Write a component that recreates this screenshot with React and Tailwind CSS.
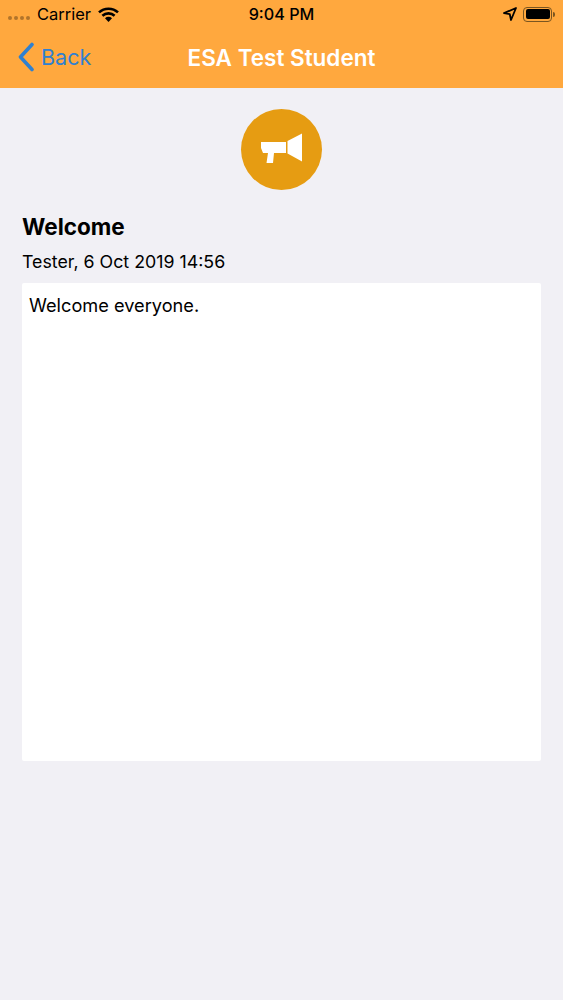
import React from 'react';

const Wifi = () => (
  <svg width="21" height="15" viewBox="0 0 21 15" className="ml-[7px]">
    <path d="M1 5.4 A14 14 0 0 1 20 5.4" fill="none" stroke="#000" strokeWidth="2.6" />
    <path d="M4.4 8.8 A9 9 0 0 1 16.6 8.8" fill="none" stroke="#000" strokeWidth="2.6" />
    <path d="M7 11.2 A5 5 0 0 1 14 11.2 L10.5 15 Z" fill="#000" />
  </svg>
);

const Megaphone = () => (
  <svg width="43" height="31" viewBox="0 0 43 31" className="mb-[2px]">
    <path d="M1 9 H26 V20 H14 L13 30 H6.5 L8 20 H3 L1 15 Z" fill="#fff" />
    <path d="M27.5 8 L42 0.5 V28.5 L27.5 20.5 Z" fill="#fff" />
  </svg>
);

const App = () => {
  return (
    <div className="w-[563px] h-[1000px] bg-[#f1f0f5] text-black font-['Inter','Liberation_Sans',sans-serif] overflow-hidden">
      <div className="h-[88px] bg-[#ffa83e] flex flex-col">
        <div className="h-[28px] grid grid-cols-3 items-center pl-[8px] pr-[8px]">
          <div className="flex items-center">
            <div className="flex gap-[2px] opacity-30 mt-[8px]">
              <span className="w-[4px] h-[4px] rounded-full bg-black"></span>
              <span className="w-[4px] h-[4px] rounded-full bg-black"></span>
              <span className="w-[4px] h-[4px] rounded-full bg-black"></span>
              <span className="w-[4px] h-[4px] rounded-full bg-black"></span>
            </div>
            <span className="ml-[7px] text-[16.5px] whitespace-nowrap">Carrier</span>
            <Wifi />
          </div>
          <div className="text-center text-[16.2px] font-medium whitespace-nowrap">9:04 PM</div>
          <div className="flex items-center justify-end gap-[6px]">
            <svg width="14" height="14" viewBox="0 0 14 14">
              <path d="M13 1 L1 6.2 L6.8 7.2 L8 13 Z" fill="none" stroke="#000" strokeWidth="1.8" strokeLinejoin="round" />
            </svg>
            <div className="flex items-center">
              <div className="w-[29px] h-[15px] rounded-[4px] border border-[#7a5520] p-[1.5px]">
                <div className="w-full h-full rounded-[2px] bg-black"></div>
              </div>
              <div className="w-[1.5px] h-[5px] bg-[#7a5520] ml-[1px] rounded-r-sm"></div>
            </div>
          </div>
        </div>
        <div className="relative flex-1 flex items-center justify-center">
          <div className="absolute left-[17px] top-[14px] flex items-center text-[#2f80d0]">
            <svg width="18" height="30" viewBox="0 0 18 30">
              <path d="M15 2.5 L3.5 15 L15 27.5" fill="none" stroke="#2f80d0" strokeWidth="3.6" strokeLinecap="round" strokeLinejoin="round" />
            </svg>
            <span className="ml-[6px] text-[21.5px] leading-[30px]">Back</span>
          </div>
          <span className="text-white text-[22.5px] font-semibold whitespace-nowrap">ESA Test Student</span>
        </div>
      </div>

      <div className="flex justify-center pt-[21px]">
        <div className="w-[81px] h-[81px] rounded-full bg-[#e69c12] flex items-center justify-center">
          <Megaphone />
        </div>
      </div>

      <div className="px-[22px]">
        <h1 className="mt-[22px] text-[22.5px] leading-[30px] font-bold">Welcome</h1>
        <p className="mt-[8px] text-[17.8px] leading-[24px]">Tester, 6 Oct 2019 14:56</p>
        <div className="mt-[9px] h-[478px] bg-white rounded-[2px] pl-[7px] pt-[10px] text-[18.2px] leading-[24px]">
          Welcome everyone.
        </div>
      </div>
    </div>
  );
};

export default App;
